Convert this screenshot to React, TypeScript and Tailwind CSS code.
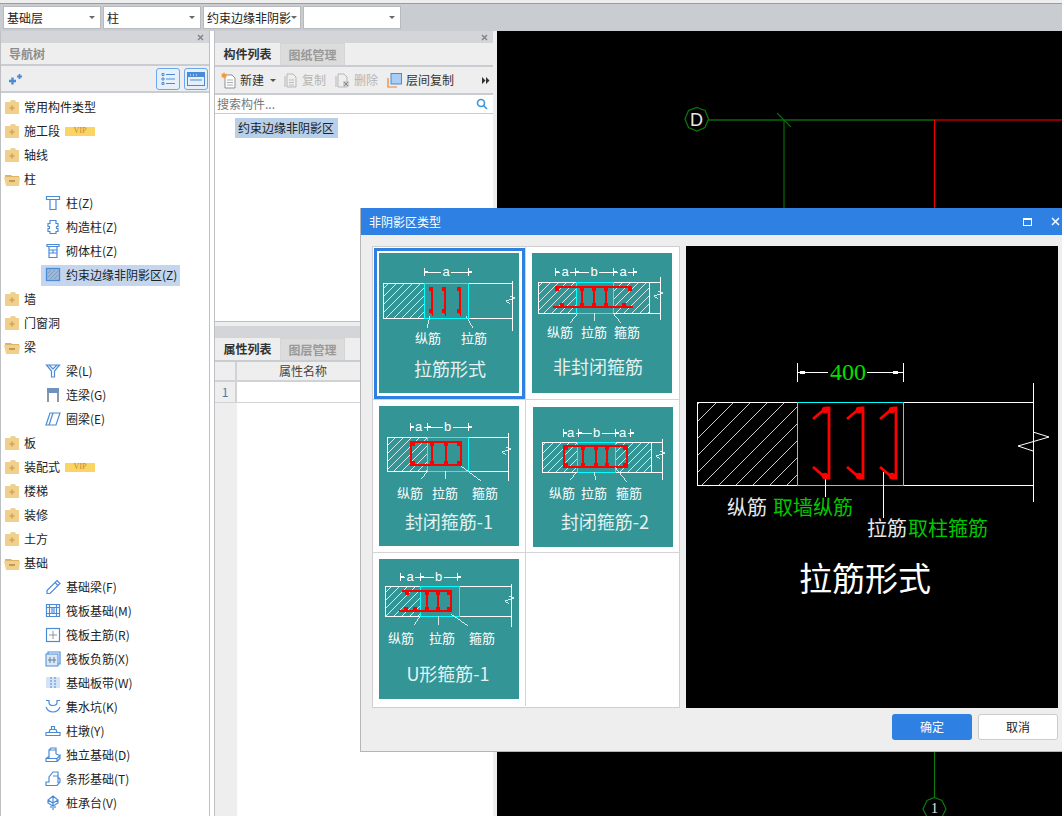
import type { ReactNode } from 'react';

const BLUE = '#4a8bd8';

function Caret() {
  return <span className="ml-auto h-0 w-0 border-x-[3px] border-t-[3px] border-x-transparent border-t-[#666]" />;
}

function Combo({ text }: { text: string }) {
  return (
    <div className="flex h-[23px] w-[98px] items-center overflow-hidden border border-[#b8babd] bg-white pl-[3px] pr-[5px] text-[12px] text-[#222]">
      <span className="whitespace-nowrap">{text}</span>
      <Caret />
    </div>
  );
}

function CloseBar() {
  return (
    <div className="flex h-[12px] items-center justify-end bg-[#d3d5d9] pr-[5px] text-[#777]">
      <svg width="7" height="7" viewBox="0 0 7 7">
        <path d="M1 1l5 5M6 1L1 6" stroke="#7d8288" strokeWidth="1.4" />
      </svg>
    </div>
  );
}

function Folder({ open }: { open?: boolean }) {
  if (open) {
    return (
      <svg width="17" height="13" viewBox="0 0 17 13" className="ml-[3px] shrink-0">
        <path d="M1 2h6l1 1h7v2H1z" fill="#dcb469" />
        <path d="M0 4h16l-1 9H2z" fill="#efd08c" />
        <rect x="5" y="7" width="6" height="2" fill="#c49a4f" />
      </svg>
    );
  }
  return (
    <svg width="17" height="14" viewBox="0 0 17 14" className="ml-[3px] shrink-0">
      <path d="M7 0h4l1 2H6z" fill="#e9d3a0" />
      <rect x="1" y="2" width="14" height="12" fill="#f0d08c" />
      <path d="M5.500 8h5M8 5.500v5" stroke="#d2a654" strokeWidth="1.600" />
    </svg>
  );
}

function TreeIcon({ name }: { name: string }) {
  const s = { fill: 'none', stroke: BLUE, strokeWidth: 1.2 };
  let body: ReactNode = null;
  switch (name) {
    case 'column':
      body = <path {...s} d="M1.500 1.500h13v3h-13zM5 4.500v10h6v-10" />;
      break;
    case 'gz':
      body = <path {...s} d="M5 1.500h6v3h2v3h-1.500v2H13v3h-2v2H5v-2H3v-3h1.500v-2H3v-3h2z" />;
      break;
    case 'brick':
      body = <path {...s} d="M2 1.500h12v2H2zM4 3.500h8v11H4zM4 7h8M4 10h8M8 7v3" />;
      break;
    case 'hatch':
      body = (
        <>
          <rect x="1.500" y="1.500" width="13" height="12" fill="#9db8d9" stroke={BLUE} strokeWidth="1.300" />
          <path d="M3 6l3-3M3 10l7-7M5 12l8-8M9 12l4-4" stroke="#6f8fb5" strokeWidth="0.700" />
        </>
      );
      break;
    case 'beam':
      body = <path {...s} d="M1.500 2h13L9.500 8v6h-3V8zM4 2l4 4 4-4" />;
      break;
    case 'link':
      body = (
        <>
          <path d="M2 1h12v5H2z" fill="#6f93bc" />
          <path d="M3 6v9M13 6v9" stroke="#8f98a3" strokeWidth="2" fill="none" />
        </>
      );
      break;
    case 'ring':
      body = <path {...s} d="M5 2h10l-4 12H1zM8 2L4 14" />;
      break;
    case 'pencil':
      body = <path {...s} d="M12 1.500l3 3-10 10H2v-3zM10 3.500l3 3" />;
      break;
    case 'raft':
      body = <path {...s} d="M1.500 1.500h13v12h-13zM4.500 1.500v12M11.500 1.500v12M1.500 4.500h13M1.500 10.500h13M7 4.500v6M9 4.500v6" />;
      break;
    case 'main':
      body = (
        <>
          <rect x="1.500" y="1.500" width="13" height="13" {...s} />
          <path d="M8 4v8M4 8h8" stroke="#8f98a3" fill="none" />
        </>
      );
      break;
    case 'neg':
      body = (
        <>
          <rect x="1" y="3" width="12" height="12" fill="#dbe8f7" stroke={BLUE} />
          <path d="M3 3V1h12v12h-2" {...s} />
          <path d="M5 6v6M9 6v6M3 9h8" stroke="#5f7c9e" fill="none" />
        </>
      );
      break;
    case 'strip':
      body = (
        <>
          <rect x="1" y="2" width="14" height="11" fill="#d5e3f4" />
          <path d="M6 2v11M10 2v11" stroke={BLUE} strokeDasharray="2 1" />
        </>
      );
      break;
    case 'pit':
      body = <path {...s} d="M1 1.500h3v2q0 3 4 3t4-3v-2h3M1 8q2 5 7 5t7-5" />;
      break;
    case 'pier':
      body = <path {...s} d="M1 9.500h14v3H1zM4 9.500l1-3h6l1 3M6.500 6.500v-3h3v3" />;
      break;
    case 'iso':
      body = <path {...s} d="M1 11.500h11v3H1zM12 11.500l3-3v3l-3 3M4 11V3l2-2h5v6M4 3h7M1 11.500l3-2M11 7l4 1.500" />;
      break;
    case 'bar':
      body = <path {...s} d="M1 14.500V11h3V6l4-5h5v5l2 2v3l-3 3.500zM8 5h5M13 6v6" />;
      break;
    case 'cap':
      body = <path {...s} d="M8 1l5 4v3l-5 3-5-3V5zM8 1v14M3 5l5 3 5-3M6 11v2M10 11v2" />;
      break;
  }
  return (
    <svg width="16" height="16" viewBox="0 0 16 16" className="shrink-0">
      {body}
    </svg>
  );
}

type TreeRow = { label: string; icon?: string; open?: boolean; vip?: boolean; active?: boolean };

const tree: TreeRow[] = [
  { label: '常用构件类型' },
  { label: '施工段', vip: true },
  { label: '轴线' },
  { label: '柱', open: true },
  { label: '柱(Z)', icon: 'column' },
  { label: '构造柱(Z)', icon: 'gz' },
  { label: '砌体柱(Z)', icon: 'brick' },
  { label: '约束边缘非阴影区(Z)', icon: 'hatch', active: true },
  { label: '墙' },
  { label: '门窗洞' },
  { label: '梁', open: true },
  { label: '梁(L)', icon: 'beam' },
  { label: '连梁(G)', icon: 'link' },
  { label: '圈梁(E)', icon: 'ring' },
  { label: '板' },
  { label: '装配式', vip: true },
  { label: '楼梯' },
  { label: '装修' },
  { label: '土方' },
  { label: '基础', open: true },
  { label: '基础梁(F)', icon: 'pencil' },
  { label: '筏板基础(M)', icon: 'raft' },
  { label: '筏板主筋(R)', icon: 'main' },
  { label: '筏板负筋(X)', icon: 'neg' },
  { label: '基础板带(W)', icon: 'strip' },
  { label: '集水坑(K)', icon: 'pit' },
  { label: '柱墩(Y)', icon: 'pier' },
  { label: '独立基础(D)', icon: 'iso' },
  { label: '条形基础(T)', icon: 'bar' },
  { label: '桩承台(V)', icon: 'cap' },
];

function Vip() {
  return (
    <span className="ml-[5px] flex h-[9px] w-[30px] items-center justify-center bg-[#fcd464] font-['Liberation_Serif',serif] text-[8px] leading-none text-[#b98c3d]">
      VIP
    </span>
  );
}

function NavTree() {
  return (
    <div className="flex w-[210px] shrink-0 flex-col border-x border-[#bdbfc2] bg-white">
      <CloseBar />
      <div className="flex h-[23px] items-center border-b-2 border-[#c9ccd0] bg-[#eeeeee] pl-[8px] text-[12px] font-bold text-[#8d8d8d]">
        导航树
      </div>
      <div className="flex h-[27px] items-center border-b-2 border-[#c9ccd0] bg-[#eeeeee] pl-[7px] pr-[1px]">
        <svg width="14" height="12" viewBox="0 0 14 12">
          <path d="M1 8h7M4.500 4.500v7" stroke={BLUE} strokeWidth="2.400" />
          <path d="M9 3.500h5M11.500 1v5" stroke={BLUE} strokeWidth="1.800" />
        </svg>
        <div className="ml-auto flex gap-[4px]">
          <div className="flex h-[22px] w-[24px] items-center justify-center rounded-[3px] border border-[#69a8ec] bg-[#e6f0fb]">
            <svg width="14" height="14" viewBox="0 0 14 14" fill="none" stroke={BLUE}>
              <path d="M1 1.500h2v2H1zM1 6h2v2H1zM1 10.500h2v2H1zM5 2.500h9M5 7h9M5 11.500h9" />
            </svg>
          </div>
          <div className="flex h-[22px] w-[24px] items-center justify-center rounded-[3px] border border-[#69a8ec] bg-[#e6f0fb]">
            <svg width="18" height="14" viewBox="0 0 18 14">
              <rect x="0.500" y="0.500" width="17" height="13" fill="none" stroke={BLUE} />
              <rect x="1" y="1" width="16" height="4" fill={BLUE} />
              <path d="M3 3h1M6 3h1M9 3h1" stroke="#fff" />
              <path d="M3 8h12" stroke={BLUE} />
            </svg>
          </div>
        </div>
      </div>
      <div className="flex-1 overflow-hidden pt-[2px]">
        {tree.map((row) => (
          <div key={row.label} className="flex h-[24px] items-center text-[12px] text-[#222]">
            {row.icon ? (
              <div className={`ml-[40px] flex h-[21px] items-center pl-[4px] pr-[3px] ${row.active ? 'bg-[#c4d6ee]' : ''}`}>
                <TreeIcon name={row.icon} />
                <span className="ml-[5px] whitespace-nowrap">{row.label}</span>
              </div>
            ) : (
              <>
                <Folder open={row.open} />
                <span className="ml-[3px]">{row.label}</span>
                {row.vip && <Vip />}
              </>
            )}
          </div>
        ))}
      </div>
    </div>
  );
}

function Tabs({ first, second }: { first: string; second: string }) {
  return (
    <div className="flex h-[24px] border-b-2 border-[#c9ccd0] bg-[#eeeeee] text-[12px]">
      <div className="flex w-[65px] items-center justify-center font-bold text-[#333]">{first}</div>
      <div className="flex w-[65px] items-center justify-center border-x border-t border-[#d5d5d5] bg-[#dcdcdc] font-bold text-[#999]">
        {second}
      </div>
    </div>
  );
}

function ComponentPanel() {
  return (
    <div className="relative ml-[4px] flex w-[279px] shrink-0 flex-col border-l border-[#bdbfc2] bg-white">
      <CloseBar />
      <Tabs first="构件列表" second="图纸管理" />
      <div className="flex h-[28px] items-center border-b-2 border-[#c9ccd0] bg-[#eeeeee] pl-[6px] text-[12px]">
        <svg width="17" height="17" viewBox="0 0 17 17">
          <path d="M4 3h7l3 3v10H4z" fill="#fff" stroke="#8b8f94" />
          <path d="M6 8h6M6 10.500h6M6 13h6" stroke="#aaa" />
          <path d="M3 0l1 2 2-.5-1 2 1 2-2-.5-1 2-1-2-2 .5 1-2-1-2 2 .5z" fill="#f29a38" />
        </svg>
        <span className="ml-[2px] text-[#333]">新建</span>
        <span className="ml-[6px] h-0 w-0 border-x-[3px] border-t-[3px] border-x-transparent border-t-[#555]" />
        <svg width="14" height="15" viewBox="0 0 14 15" className="ml-[8px]">
          <path d="M3 1h6l3 3v10H3zM1 3v11" fill="none" stroke="#b7b7b7" />
          <path d="M5 7h5M5 9.500h5M5 12h5" stroke="#bbb" />
        </svg>
        <span className="ml-[4px] text-[#b5b5b5]">复制</span>
        <svg width="15" height="15" viewBox="0 0 15 15" className="ml-[9px]">
          <path d="M3 1h6l3 3v10H3zM1 3v11" fill="none" stroke="#b7b7b7" />
          <rect x="8" y="8" width="6" height="6" fill="#ccc" />
          <path d="M9 9l4 4M13 9l-4 4" stroke="#888" />
        </svg>
        <span className="ml-[4px] text-[#b5b5b5]">删除</span>
        <svg width="15" height="15" viewBox="0 0 15 15" className="ml-[9px]">
          <path d="M1 5v9h9" fill="none" stroke="#e9822f" strokeWidth="1.200" />
          <rect x="4" y="0.500" width="10.500" height="10.500" fill="#a9cdf3" stroke="#4a8bd8" />
        </svg>
        <span className="ml-[4px] text-[#333]">层间复制</span>
        <svg width="8" height="7" viewBox="0 0 8 7" className="ml-auto mr-[3px]">
          <path d="M0 0l3.500 3.500L0 7zM4 0l3.500 3.500L4 7z" fill="#333" />
        </svg>
      </div>
      <div className="flex h-[19px] items-center border-b border-[#c9ccd0] bg-white pl-[2px] pr-[5px] text-[12px] text-[#777]">
        <span>搜索构件...</span>
        <svg width="12" height="12" viewBox="0 0 12 12" className="ml-auto" fill="none" stroke="#3c95d6" strokeWidth="1.600">
          <circle cx="5" cy="5" r="3.500" />
          <path d="M7.500 7.500L11 11" />
        </svg>
      </div>
      <div className="h-[208px] border-b border-[#bdbfc2] bg-white pl-[20px] pt-[4px] text-[12px] text-[#222]">
        <span className="flex h-[20px] w-[103px] items-center bg-[#b7cfe9] pl-[3px]">约束边缘非阴影区</span>
      </div>
      <div className="h-[4px] bg-[#eeeeee]" />
      <CloseBar />
      <Tabs first="属性列表" second="图层管理" />
      <div className="flex h-[20px] border-b-2 border-[#d0d2d5] bg-[#eeeeee] text-[12px] text-[#444]">
        <div className="w-[22px] border-r-2 border-[#d0d2d5]" />
        <div className="flex w-[132px] items-center justify-center">属性名称</div>
      </div>
      <div className="flex h-[21px] border-b border-[#d0d2d5] text-[12px]">
        <div className="flex w-[22px] items-center justify-center border-r-2 border-[#d0d2d5] bg-[#eeeeee] text-[#4a7aa8]">1</div>
      </div>
      <div className="w-[22px] flex-1 bg-[#eeeeee]" />
    </div>
  );
}

function CadCanvas() {
  // drawing coordinates are page coordinates minus the canvas origin (497, 31)
  return (
    <div className="relative flex-1 bg-black">
      <svg width="565" height="785" viewBox="497 31 565 785" className="absolute inset-0">
        <path d="M708 120H935" stroke="#0a6a0a" strokeWidth="1.500" />
        <path d="M784 120V210M777 113l14 14" stroke="#0a6a0a" strokeWidth="1.200" />
        <path d="M935 120h127" stroke="#b50000" strokeWidth="1.500" />
        <path d="M934.500 120v90" stroke="#f00000" strokeWidth="1.200" />
        <polygon points="697,107.500 705,110.500 708.500,119 705,127.500 697,131 688.500,127.500 685,119 688.500,110.500" fill="none" stroke="#0a7a0a" strokeWidth="1.200" />
        <text x="696.500" y="125.500" textAnchor="middle" fill="#e8e8e8" fontSize="18" fontFamily="Liberation Sans">D</text>
        <path d="M934.500 750v48" stroke="#0a7a0a" strokeWidth="1.200" />
        <polygon points="934.500,797.500 942,800.500 946,809 942,817 927,817 923,809 927,800.500" fill="none" stroke="#0a7a0a" strokeWidth="1.200" />
        <text x="934.500" y="813" textAnchor="middle" fill="#e8e8e8" fontSize="14" fontFamily="Liberation Serif">1</text>
      </svg>
    </div>
  );
}

function Hatch({ id, x, y, w, h, gap, color = '#fff' }: { id: string; x: number; y: number; w: number; h: number; gap: number; color?: string }) {
  return (
    <>
      <pattern id={id} width={gap} height={gap} patternUnits="userSpaceOnUse">
        <path d={`M0 ${gap}L${gap} 0`} stroke={color} strokeWidth="0.800" />
      </pattern>
      <rect x={x} y={y} width={w} height={h} fill={`url(#${id})`} />
    </>
  );
}

function Dim({ y, xs, labels }: { y: number; xs: number[]; labels: string[] }) {
  return (
    <g>
      {xs.slice(0, -1).map((x, i) => {
        const end = xs[i + 1];
        const mid = (x + end) / 2;
        return (
          <g key={x}>
            <path d={`M${x} ${y}H${mid - 5}M${mid + 5} ${y}H${end}`} stroke="#fff" strokeWidth="1" />
            <text x={mid} y={y + 4} textAnchor="middle" fill="#fff" fontSize="13" fontFamily="Liberation Sans">
              {labels[i]}
            </text>
          </g>
        );
      })}
      {xs.map((x) => (
        <g key={x}>
          <path d={`M${x} ${y - 4}v8`} stroke="#fff" strokeWidth="1" />
          <rect x={x + 1} y={y - 1} width="2.500" height="2" fill="#fff" />
        </g>
      ))}
    </g>
  );
}

// little knots where the tie bars meet the main bars
function Knots({ pts }: { pts: [number, number][] }) {
  return (
    <g>
      {pts.map(([x, y]) => (
        <rect key={`${x}-${y}`} x={x - 2} y={y - 2} width="4" height="4" fill="#ff0000" />
      ))}
    </g>
  );
}

function Thumb({ title, titleX, titleY, labels, labelY, lead, children }: {
  title: string;
  titleX: number;
  titleY: number;
  labels: [string, number][];
  labelY: number;
  lead: string;
  children: ReactNode;
}) {
  return (
    <svg width="140" height="140" viewBox="0 0 140 140" shapeRendering="crispEdges" className="block bg-[#339595]">
      {children}
      <path d={lead} stroke="#fff" strokeWidth="0.800" fill="none" />
      {labels.map(([t, x]) => (
        <text key={t} x={x} y={labelY} textAnchor="middle" fill="#fff" fontSize="13">
          {t}
        </text>
      ))}
      <text x={titleX} y={titleY} textAnchor="middle" fill="#e4f2f2" fontSize="18">
        {title}
      </text>
    </svg>
  );
}

function Break({ x, y }: { x: number; y: number }) {
  return <path d={`M${x} ${y - 6}l5 2-9 3 4 3`} stroke="#fff" strokeWidth="0.800" fill="none" />;
}

function Wall({ x1, y1, y2, end, vy1, vy2 }: { x1: number; y1: number; y2: number; end: number; vy1: number; vy2: number }) {
  return (
    <path
      d={`M${end} ${y1}H${x1}V${y2}H${end}M${end} ${vy1}V${vy2}`}
      transform="translate(0.5 0.5)"
      stroke="#fff"
      strokeWidth="1"
      fill="none"
    />
  );
}

function Zone({ x, y, w, h }: { x: number; y: number; w: number; h: number }) {
  return <rect x={x + 0.5} y={y + 0.5} width={w} height={h} fill="none" stroke="#00ffff" strokeWidth="1" />;
}

const RED = '#ff0000';

function ThumbA() {
  return (
    <Thumb title="拉筋形式" titleX={71} titleY={123} labels={[['纵筋', 49], ['拉筋', 95]]} labelY={90} lead="M51 63l-3 12M87 63l7 12">
      <Hatch id="ha" x={4} y={30} w={41} h={35} gap={8} />
      <Wall x1={4} y1={30} y2={65} end={133} vy1={27} vy2={77} />
      <Zone x={45} y={30} w={44} h={35} />
      <path d="M53 35v25l-2-3M66 35v25l-2-3M81 35v25l-2-3M53 35l-2 3M66 35l-2 3M81 35l-2 3" stroke={RED} strokeWidth="2.200" fill="none" />
      <Knots pts={[[52, 36], [65, 36], [80, 36], [52, 58], [65, 58], [80, 58]]} />
      <Break x={131} y={49} />
      <Dim y={19} xs={[45, 89]} labels={['a']} />
    </Thumb>
  );
}

function ThumbB() {
  return (
    <Thumb title="非封闭箍筋" titleX={66} titleY={121} labels={[['纵筋', 28], ['拉筋', 62], ['箍筋', 95]]} labelY={84} lead="M46 60l-8 10M62 60v8M81 60l8 10">
      <Hatch id="hb1" x={6} y={29} w={38} h={31} gap={8} />
      <Hatch id="hb2" x={81} y={29} w={36} h={31} gap={8} />
      <Wall x1={6} y1={29} y2={60} end={117} vy1={29} vy2={60} />
      <path d="M117 29.500h11M117 60.500h11M128.500 24v43" stroke="#fff" fill="none" />
      <Zone x={44} y={29} w={37} h={31} />
      <path d="M23 34h77M21 54h80M50 34v20M62 34v20M74 34v20" stroke={RED} strokeWidth="2.200" fill="none" />
      <Knots pts={[[25, 36], [50, 36], [62, 36], [74, 36], [98, 36], [30, 52], [50, 52], [62, 52], [74, 52], [92, 52]]} />
      <Break x={126} y={44} />
      <Dim y={19} xs={[23, 43, 81, 101]} labels={['a', 'b', 'a']} />
    </Thumb>
  );
}

function ThumbC() {
  return (
    <Thumb title="封闭箍筋-1" titleX={70} titleY={123} labels={[['纵筋', 31], ['拉筋', 66], ['箍筋', 106]]} labelY={92} lead="M49 65l-7 8M66 65l1 8M82 60l20 15">
      <Hatch id="hc" x={8} y={31} w={40} h={34} gap={8} />
      <Wall x1={8} y1={31} y2={65} end={129} vy1={26} vy2={74} />
      <Zone x={48} y={31} w={41} h={34} />
      <path d="M32 36h50v23H32zM53 36v23M67 36v23" stroke={RED} strokeWidth="2.400" fill="none" />
      <Knots pts={[[34, 38], [53, 38], [67, 38], [80, 38], [34, 57], [53, 57], [67, 57], [80, 57]]} />
      <Break x={127} y={47} />
      <Dim y={21} xs={[31, 48, 89]} labels={['a', 'b']} />
    </Thumb>
  );
}

function ThumbD() {
  return (
    <Thumb title="封闭箍筋-2" titleX={72} titleY={122} labels={[['纵筋', 29], ['拉筋', 61], ['箍筋', 96]]} labelY={91} lead="M44 65l-7 8M61 65l2 8M82 60l12 15">
      <Hatch id="hd1" x={9} y={35} w={35} h={30} gap={8} />
      <Hatch id="hd2" x={82} y={35} w={36} h={30} gap={8} />
      <Wall x1={9} y1={35} y2={65} end={118} vy1={35} vy2={65} />
      <path d="M118 35.500h11M118 65.500h11M129.500 32v41" stroke="#fff" fill="none" />
      <Zone x={44} y={35} w={38} h={30} />
      <path d="M31 39h63v21H31zM50 39v21M63 39v21M74 39v21" stroke={RED} strokeWidth="2.400" fill="none" />
      <Knots pts={[[33, 41], [50, 41], [63, 41], [74, 41], [92, 41], [33, 58], [50, 58], [63, 58], [74, 58], [92, 58]]} />
      <Break x={127} y={50} />
      <Dim y={26} xs={[30, 45, 82, 97]} labels={['a', 'b', 'a']} />
    </Thumb>
  );
}

function ThumbE() {
  return (
    <Thumb title="U形箍筋-1" titleX={69} titleY={122} labels={[['纵筋', 22], ['拉筋', 63], ['箍筋', 103]]} labelY={84} lead="M41 57l-6 9M59 57l1 9M72 55l17 12">
      <Hatch id="he" x={6} y={27} w={35} h={30} gap={8} />
      <Wall x1={6} y1={27} y2={57} end={132} vy1={24} vy2={67} />
      <Zone x={41} y={27} w={39} h={30} />
      <path d="M23 32h49v20H20M48 32v20M59 32v20" stroke={RED} strokeWidth="2.400" fill="none" />
      <Knots pts={[[28, 34], [48, 34], [59, 34], [70, 34], [27, 50], [36, 50], [48, 50], [59, 50], [70, 50]]} />
      <Break x={130} y={43} />
      <Dim y={18} xs={[21, 41, 78]} labels={['a', 'b']} />
    </Thumb>
  );
}

function Preview() {
  const rebar = 'M32 0H35V70H32L19 59M32 0L19 11';
  return (
    <svg width="372" height="462" viewBox="0 0 372 462" className="block shrink-0 bg-black">
      <g shapeRendering="crispEdges">
        <Hatch id="pv" x={11} y={156} w={100} h={83} gap={17} />
        <path d="M347.500 156.500H11.500V239.500H347.500M347.500 137V256" stroke="#fff" strokeWidth="1" fill="none" />
        <rect x="111.500" y="156.500" width="106" height="83" fill="none" stroke="#00ffff" />
        <path d="M139.500 231v20M197.500 226v46" stroke="#fff" strokeWidth="1" />
        <path d="M111.500 117v19M217.500 117v19M111 126.500h31M181 126.500h36" stroke="#fff" strokeWidth="1" />
      </g>
      {[0, 34, 67].map((dx) => (
        <g key={dx} transform={`translate(${108 + dx} 162)`}>
          <path d={rebar} stroke="#ff0000" strokeWidth="2.800" fill="none" />
          <circle cx="31" cy="2" r="3.200" fill="#ff0000" />
          <circle cx="31" cy="68" r="3.200" fill="#ff0000" />
        </g>
      ))}
      <rect x="114" y="125" width="5" height="3" fill="#fff" />
      <rect x="207" y="125" width="5" height="3" fill="#fff" />
      <text x="162" y="134" textAnchor="middle" fill="#00e000" fontSize="24" fontFamily="Liberation Serif">400</text>
      <path d="M347 186l16 5-31 9 15 5" stroke="#fff" strokeWidth="1" fill="none" />
      <text x="41" y="269" fill="#e8e8e8" fontSize="20">纵筋</text>
      <text x="87" y="269" fill="#00c800" fontSize="20">取墙纵筋</text>
      <text x="181" y="290" fill="#e8e8e8" fontSize="20">拉筋</text>
      <text x="222" y="290" fill="#00c800" fontSize="20">取柱箍筋</text>
      <text x="113" y="345" fill="#fff" fontSize="33">拉筋形式</text>
    </svg>
  );
}

function Dialog() {
  return (
    <div className="absolute left-[360px] top-[208px] flex h-[544px] w-[702px] flex-col overflow-hidden border-b border-l border-[#b4b6b9] bg-[#eeeeee]">
      <div className="flex h-[27px] shrink-0 items-center bg-[#2e80e2] pl-[8px] pr-[2px] text-[12px] text-white">
        <span>非阴影区类型</span>
        <svg width="9" height="8" viewBox="0 0 9 8" className="ml-auto" fill="none" stroke="#fff">
          <rect x="0.500" y="0.500" width="8" height="7" />
          <path d="M0 1.500h9" />
        </svg>
        <svg width="9" height="9" viewBox="0 0 9 9" className="ml-[19px]" stroke="#fff" strokeWidth="1.500">
          <path d="M1 1l7 7M8 1L1 8" />
        </svg>
      </div>
      <div className="flex pl-[11px] pt-[11px]">
        <div className="grid h-[462px] w-[308px] shrink-0 grid-cols-[153px_153px] grid-rows-[153px_153px_153px] border border-[#cfcfcf] bg-white">
          <div className="border-b border-r border-[#d4d4d4]">
            <div className="m-px h-[151px] w-[151px] border-[3px] border-[#2e80e2] p-[2px]">
              <ThumbA />
            </div>
          </div>
          <div className="border-b border-[#d4d4d4] p-[6px]">
            <ThumbB />
          </div>
          <div className="border-b border-r border-[#d4d4d4] p-[6px]">
            <ThumbC />
          </div>
          <div className="border-b border-[#d4d4d4] pl-[7px] pt-[7px]">
            <ThumbD />
          </div>
          <div className="border-r border-[#d4d4d4] p-[6px]">
            <ThumbE />
          </div>
          <div />
        </div>
        <div className="ml-[6px]">
          <Preview />
        </div>
      </div>
      <div className="flex justify-end gap-[6px] pr-[4px] pt-[6px] text-[12px]">
        <div className="flex h-[26px] w-[80px] items-center justify-center rounded-[3px] bg-[#2e80e2] text-white">确定</div>
        <div className="flex h-[26px] w-[80px] items-center justify-center rounded-[3px] border border-[#cccccc] bg-white text-[#222]">取消</div>
      </div>
    </div>
  );
}

export default function App() {
  return (
    <div className="relative flex h-[816px] w-[1062px] flex-col overflow-hidden bg-[#eeeeee] font-['Noto_Sans_CJK_SC',sans-serif]">
      <div className="h-[3px] shrink-0 bg-[#eeeeee]" />
      <div className="flex h-[28px] shrink-0 gap-[2px] border-t border-[#9a9c9f] bg-[#c9ccd0] pl-[3px] pt-[2px]">
        <Combo text="基础层" />
        <Combo text="柱" />
        <Combo text="约束边缘非阴影" />
        <Combo text="" />
      </div>
      <div className="flex min-h-0 flex-1 bg-white">
        <NavTree />
        <ComponentPanel />
        <div className="w-[4px] shrink-0 bg-[#eeeeee]" />
        <CadCanvas />
      </div>
      <Dialog />
    </div>
  );
}
